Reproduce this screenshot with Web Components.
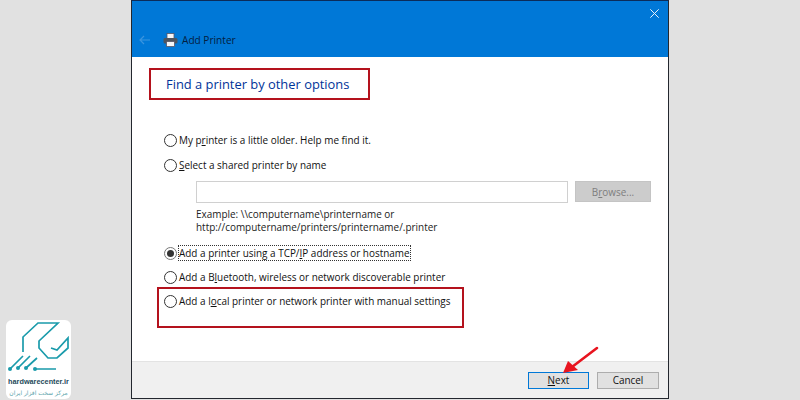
<!DOCTYPE html>
<html>
<head>
<meta charset="utf-8">
<style>
    html,body{margin:0;padding:0;}
    body{width:800px;height:400px;overflow:hidden;background:#e1e1e1;position:relative;
        font-family:"Open Sans","Noto Sans",sans-serif;}
</style>
</head>
<body>
<add-printer-window>
    <span slot="title">Add Printer</span>
    <wizard-heading>Find a printer by other options</wizard-heading>
    <wizard-radio style="margin-bottom:1px">My p<u>r</u>inter is a little older. Help me find it.</wizard-radio>
    <wizard-radio><u>S</u>elect a shared printer by name</wizard-radio>
    <shared-name></shared-name>
    <wizard-radio checked focused>Add a printer using a TCP/<u>I</u>P address or hostname</wizard-radio>
    <wizard-radio>Add a B<u>l</u>uetooth, wireless or network discoverable printer</wizard-radio>
    <wizard-radio>Add a l<u>o</u>cal printer or network printer with manual settings</wizard-radio>
    <wizard-button slot="footer" primary><u>N</u>ext</wizard-button>
    <wizard-button slot="footer">Cancel</wizard-button>
</add-printer-window>
<red-box style="left:149px;top:68px;width:221px;height:32px"></red-box>
<red-box style="left:157px;top:287px;width:307px;height:41px"></red-box>
<red-arrow></red-arrow>
<site-logo></site-logo>

<script>
const tmplWindow = document.createElement('template');
tmplWindow.innerHTML = `
    <style>
        :host{display:flex;flex-direction:column;box-sizing:border-box;width:538px;height:399px;margin-left:131px;
            background:#fff;border:1px solid #23272e;border-top-color:#0b2c5a;color:#000;}
        .bar{height:56px;flex:none;background:#0078d7;display:flex;flex-direction:column;padding:0 9px 0 7px;box-sizing:border-box;}
        .close{height:17px;display:flex;justify-content:flex-end;align-items:flex-end;}
        .head{display:flex;align-items:center;height:23px;margin-top:10px;}
        .back{margin-right:13px;}
        .printer{margin-right:4px;}
        .title{font-size:10.1px;color:#04203f;}
        .body{flex:1;display:flex;flex-direction:column;padding:0 0 0 32px;}
        .foot{height:37px;flex:none;box-sizing:border-box;background:#f0f0f0;border-top:1px solid #e3e3e3;
            display:flex;justify-content:flex-end;align-items:center;gap:8px;padding:0 9px 0 0;}
    </style>
    <div class="bar">
        <div class="close">
            <svg width="9" height="9" viewBox="0 0 9 9"><path d="M.3.3l8.4 8.4M8.7.3L.3 8.7" stroke="#e8f2fb" stroke-width="1" fill="none"/></svg>
        </div>
        <div class="head">
            <svg class="back" width="11" height="10" viewBox="0 0 11 10"><path d="M11 5H1M5 1L1 5l4 4" stroke="#3a95df" stroke-width="1.2" fill="none"/></svg>
            <svg class="printer" width="15" height="14" viewBox="0 0 15 14">
                <rect x="4" y="0.5" width="7" height="5" fill="#f4f6f8" stroke="#556" stroke-width=".8"/>
                <rect x="0.5" y="5" width="14" height="5.5" rx="1.5" fill="#4c5560"/>
                <rect x="3.5" y="8.5" width="8" height="5" fill="#f4f6f8" stroke="#556" stroke-width=".8"/>
            </svg>
            <div class="title"><slot name="title"></slot></div>
        </div>
    </div>
    <div class="body"><slot></slot></div>
    <div class="foot"><slot name="footer"></slot></div>
`;
class AddPrinterWindow extends HTMLElement {
    constructor() {
        super()
        this.attachShadow({ mode: 'open' })
        this.shadowRoot.appendChild(tmplWindow.content.cloneNode(true))
    }
}
window.customElements.define('add-printer-window', AddPrinterWindow);

const tmplHeading = document.createElement('template');
tmplHeading.innerHTML = `
    <style>
        :host{display:block;height:71px;padding-top:16px;box-sizing:border-box;margin-left:2px;
            font-size:12.9px;line-height:22px;color:#003399;}
    </style>
    <slot></slot>
`;
class WizardHeading extends HTMLElement {
    constructor() {
        super()
        this.attachShadow({ mode: 'open' })
        this.shadowRoot.appendChild(tmplHeading.content.cloneNode(true))
    }
}
window.customElements.define('wizard-heading', WizardHeading);

const tmplRadio = document.createElement('template');
tmplRadio.innerHTML = `
    <style>
        :host{display:flex;align-items:center;height:24px;font-size:9.95px;color:#111;}
        .dot{width:11px;height:11px;border:1px solid #333;border-radius:50%;flex:none;margin-right:2px;background:#fff;
            display:flex;align-items:center;justify-content:center;}
        .dot i{display:none;width:7px;height:7px;border-radius:50%;background:#333;}
        :host([checked]) .dot i{display:block;}
        :host([checked]) .dot{border-color:#777;}
        .label{white-space:nowrap;line-height:14px;}
        :host([focused]) .label{outline:1px dotted #333;outline-offset:0;}
    </style>
    <span class="dot"><i></i></span>
    <span class="label"><slot></slot></span>
`;
class WizardRadio extends HTMLElement {
    constructor() {
        super()
        this.attachShadow({ mode: 'open' })
        this.shadowRoot.appendChild(tmplRadio.content.cloneNode(true))
    }
}
window.customElements.define('wizard-radio', WizardRadio);

const tmplShared = document.createElement('template');
tmplShared.innerHTML = `
    <style>
        :host{display:block;margin-left:32px;height:64px;padding-top:4px;box-sizing:border-box;font-size:9.95px;color:#222;}
        .row{display:flex;gap:7px;margin-bottom:5px;}
        .input{width:372px;height:22px;box-sizing:border-box;border:1px solid #d0d0d0;background:#fff;}
        .browse{width:76px;height:21px;box-sizing:border-box;background:#cccccc;border:1px solid #c4c4c4;color:#7e7e7e;
            display:flex;align-items:center;justify-content:center;}
        .hint{line-height:13px;white-space:nowrap;}
    </style>
    <div class="row">
        <div class="input"></div>
        <div class="browse"><span>B<u>r</u>owse...</span></div>
    </div>
    <div class="hint">Example: \\\\computername\\printername or<br>http://computername/printers/printername/.printer</div>
`;
class SharedName extends HTMLElement {
    constructor() {
        super()
        this.attachShadow({ mode: 'open' })
        this.shadowRoot.appendChild(tmplShared.content.cloneNode(true))
    }
}
window.customElements.define('shared-name', SharedName);

const tmplButton = document.createElement('template');
tmplButton.innerHTML = `
    <style>
        :host{display:flex;align-items:center;justify-content:center;width:62px;height:17px;box-sizing:border-box;
            background:#e1e1e1;border:1px solid #adadad;font-size:9.95px;color:#111;}
        :host([primary]){width:61px;border:1.5px solid #0078d7;}
    </style>
    <slot></slot>
`;
class WizardButton extends HTMLElement {
    constructor() {
        super()
        this.attachShadow({ mode: 'open' })
        this.shadowRoot.appendChild(tmplButton.content.cloneNode(true))
    }
}
window.customElements.define('wizard-button', WizardButton);

const tmplRedBox = document.createElement('template');
tmplRedBox.innerHTML = `
    <style>
        :host{display:block;position:absolute;box-sizing:border-box;border:2px solid #b4121d;}
    </style>
`;
class RedBox extends HTMLElement {
    constructor() {
        super()
        this.attachShadow({ mode: 'open' })
        this.shadowRoot.appendChild(tmplRedBox.content.cloneNode(true))
    }
}
window.customElements.define('red-box', RedBox);

const tmplArrow = document.createElement('template');
tmplArrow.innerHTML = `
    <style>
        :host{display:block;position:absolute;left:560px;top:344px;width:42px;height:34px;}
    </style>
    <svg width="42" height="34" viewBox="0 0 42 34">
        <path d="M37 4L12 23" stroke="#e8141f" stroke-width="2.6" stroke-linecap="round" fill="none"/>
        <path d="M3 29L8 17L18 26Z" fill="#e8141f"/>
    </svg>
`;
class RedArrow extends HTMLElement {
    constructor() {
        super()
        this.attachShadow({ mode: 'open' })
        this.shadowRoot.appendChild(tmplArrow.content.cloneNode(true))
    }
}
window.customElements.define('red-arrow', RedArrow);

const tmplLogo = document.createElement('template');
tmplLogo.innerHTML = `
    <style>
        :host{display:flex;flex-direction:column;align-items:center;position:absolute;left:6px;top:320px;width:65px;height:79px;
            box-sizing:border-box;background:#fff;border-radius:6px;overflow:hidden;}
        svg{flex:none;}
        .site{font:bold 7.3px/10px "Liberation Sans",sans-serif;color:#1d4a5a;white-space:nowrap;margin-top:1px;}
        .fa{font:6px/11px "DejaVu Sans",sans-serif;color:#5aa3ab;white-space:nowrap;}
    </style>
    <svg width="65" height="56" viewBox="0 0 65 56" fill="none" stroke="#1a9bab" stroke-width="1.7">
        <path d="M17 32V17L32 3H52L33 21V28L42 38H51L62 28V18L51 30L45 28"/>
        <path d="M4 49L17 36M12 48L24 36M20 48L31 38M29 49H50"/>
        <circle cx="4" cy="49" r="2" fill="#1a9bab" stroke="none"/>
        <circle cx="12" cy="48" r="2" fill="#1a9bab" stroke="none"/>
        <circle cx="20" cy="48" r="2" fill="#1a9bab" stroke="none"/>
        <circle cx="29" cy="49" r="2" fill="#1a9bab" stroke="none"/>
    </svg>
    <div class="site">hardwarecenter.ir</div>
    <div class="fa" dir="rtl">مرکز سخت افزار ایران</div>
`;
class SiteLogo extends HTMLElement {
    constructor() {
        super()
        this.attachShadow({ mode: 'open' })
        this.shadowRoot.appendChild(tmplLogo.content.cloneNode(true))
    }
}
window.customElements.define('site-logo', SiteLogo);
</script>
</body>
</html>
